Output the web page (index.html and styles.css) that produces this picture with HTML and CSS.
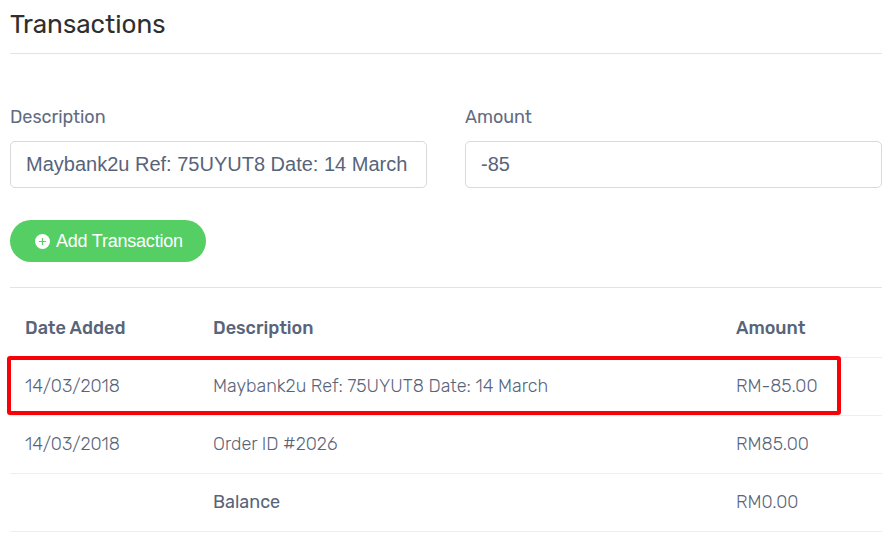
FILE: index.html
```html
<!DOCTYPE html>
<html lang="en">
<head>
<meta charset="utf-8">
<title>Transactions</title>
<link rel="stylesheet" href="styles.css">
</head>
<body>
<main class="page">
  <h1 class="title">Transactions</h1>
  <form class="form">
    <div class="field">
      <label for="desc">Description</label>
      <input class="input" id="desc" type="text" value="Maybank2u Ref: 75UYUT8 Date: 14 March">
    </div>
    <div class="field">
      <label for="amt">Amount</label>
      <input class="input" id="amt" type="text" value="-85">
    </div>
  </form>
  <button class="add" type="button">
    <svg class="plus" viewBox="0 0 16 16"><circle cx="8" cy="8" r="8" fill="#fff"/><path d="M8 4.2v7.6M4.2 8h7.6" stroke="#55ce63" stroke-width="1.3"/></svg>
    <span>Add Transaction</span>
  </button>
  <section class="table">
    <div class="row head"><span>Date Added</span><span>Description</span><span>Amount</span></div>
    <div class="row marked"><span>14/03/2018</span><span>Maybank2u Ref: 75UYUT8 Date: 14 March</span><span>RM-85.00</span></div>
    <div class="row"><span>14/03/2018</span><span>Order ID #2026</span><span>RM85.00</span></div>
    <div class="row"><span></span><span class="strong">Balance</span><span>RM0.00</span></div>
  </section>
</main>
</body>
</html>
```
FILE: styles.css
```css
*, *::after { box-sizing: border-box; }
body { margin: 0; background: #fff; color: #586479; font: 300 18px/26px Rubik, Roboto, sans-serif; overflow: hidden; }
.page { padding: 0 10px; height: 546px; }
.title { margin: 0; height: 54px; padding-top: 10px; border-bottom: 1px solid #e3e3e3; color: #2f2f2f; font-size: 26px; line-height: 30px; font-weight: 400; letter-spacing: .05px; }
.form { display: grid; grid-template-columns: 417px 417px; gap: 38px; padding-top: 50px; }
.field label { display: block; height: 37px; color: #616c80; font-weight: 400; letter-spacing: -.05px; }
.input { display: block; width: 100%; height: 47px; border: 1px solid #d9d9d9; border-radius: 5px; padding: 0 15px; background: #fff; color: #586479; font: 20px "Liberation Sans", sans-serif; }
.add { display: flex; align-items: center; gap: 6px; width: 196px; height: 42px; margin: 32px 0 25px; padding: 0 0 0 25px; border: 0; border-radius: 21px; background: #55ce63; color: #fff; font: 18px "Liberation Sans", sans-serif; letter-spacing: -.22px; white-space: nowrap; }
.plus { width: 15px; height: 15px; }
.table { border-top: 1px solid #e3e3e3; padding-top: 12px; }
.row { position: relative; display: grid; grid-template-columns: 188px 523px 1fr; height: 58px; padding: 15px 0 0 15px; border-bottom: 1px solid #eee; white-space: nowrap; }
.head { font-weight: 500; }
.strong { font-weight: 400; }
.marked::after { content: ""; position: absolute; z-index: 1; left: -3px; top: -2px; width: 834px; height: 59px; border: 4px solid #f80208; border-radius: 3px; }
```
